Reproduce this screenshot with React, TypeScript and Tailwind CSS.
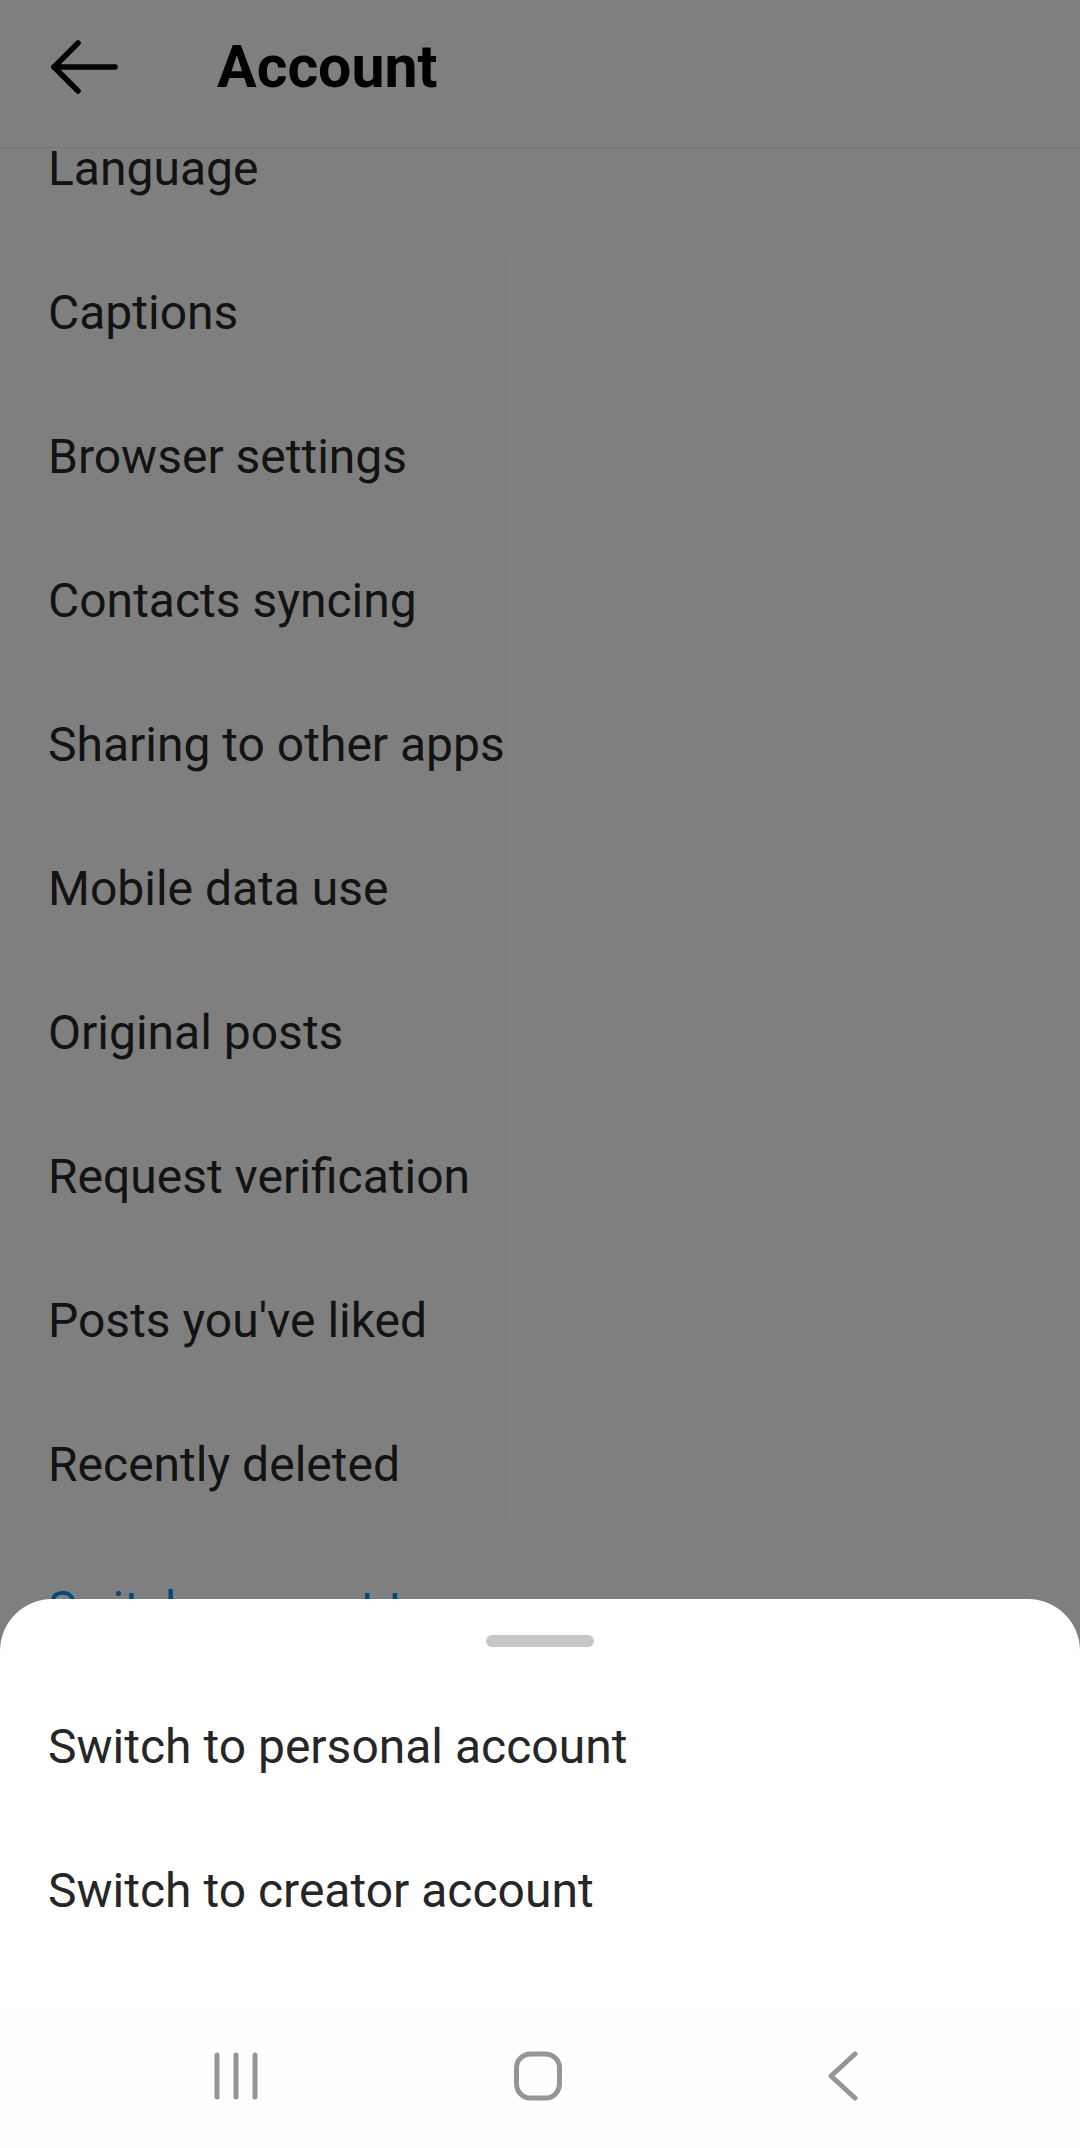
import React from 'react';

const settings = [
  'Language',
  'Captions',
  'Browser settings',
  'Contacts syncing',
  'Sharing to other apps',
  'Mobile data use',
  'Original posts',
  'Request verification',
  "Posts you've liked",
  'Recently deleted',
];

const NavBar: React.FC = () => (
  <div className="flex h-[144px] items-center bg-[#fefefe] pl-[212px]">
    <svg width="48" height="50" viewBox="0 0 48 50" className="text-[#959595]">
      <g stroke="currentColor" strokeWidth="5" strokeLinecap="round">
        <line x1="5" y1="4" x2="5" y2="46" />
        <line x1="24" y1="4" x2="24" y2="46" />
        <line x1="43" y1="4" x2="43" y2="46" />
      </g>
    </svg>
    <svg width="52" height="52" viewBox="0 0 52 52" className="ml-[252px] text-[#959595]">
      <rect x="4.5" y="4" width="43" height="44" rx="14" fill="none" stroke="currentColor" strokeWidth="5" />
    </svg>
    <svg width="34" height="52" viewBox="0 0 34 52" className="ml-[262px] text-[#959595]">
      <polyline points="29,4 5,26 29,48" fill="none" stroke="currentColor" strokeWidth="5" strokeLinecap="round" strokeLinejoin="round" />
    </svg>
  </div>
);

export default function App() {
  return (
    <div className="relative h-[2148px] w-[1080px] overflow-hidden bg-white font-[Roboto,sans-serif] text-[#262626]">
      {/* Account settings page */}
      <div className="flex h-full flex-col">
        <div className="flex h-[148px] shrink-0 items-center border-b border-[#eeeeee] pb-[14px]">
          <svg width="80" height="64" viewBox="0 0 80 64" className="mt-[6px] ml-[44px] text-black">
            <g fill="none" stroke="currentColor" strokeWidth="5.5" strokeLinecap="round" strokeLinejoin="round">
              <polyline points="34,5 10,29 34,53" />
              <line x1="10" y1="29" x2="71" y2="29" />
            </g>
          </svg>
          <h1 className="ml-[93px] text-[59px] leading-none font-bold text-black">Account</h1>
        </div>
        <div className="flex-1 overflow-hidden">
          <div className="-mt-[51px]">
            {settings.map((s) => (
              <div key={s} className="flex h-[144px] items-center pl-[48px] text-[48px]">
                {s}
              </div>
            ))}
            <div className="flex h-[144px] items-center pl-[48px] text-[48px] text-[#0095f6]">
              Switch account type
            </div>
          </div>
        </div>
      </div>

      {/* Dim scrim */}
      <div className="absolute inset-0 bg-black/50" />

      {/* Bottom sheet */}
      <div className="absolute right-0 bottom-0 left-0 flex h-[549px] flex-col rounded-t-[52px] bg-white">
        <div className="mx-auto mt-[36px] h-[12px] w-[108px] rounded-full bg-[#c7c7c7]" />
        <div className="mt-[28px]">
          <div className="flex h-[144px] items-center pl-[48px] text-[48px]">Switch to personal account</div>
          <div className="flex h-[144px] items-center pl-[48px] text-[48px]">Switch to creator account</div>
        </div>
        <div className="mt-auto">
          <NavBar />
        </div>
      </div>
    </div>
  );
}
